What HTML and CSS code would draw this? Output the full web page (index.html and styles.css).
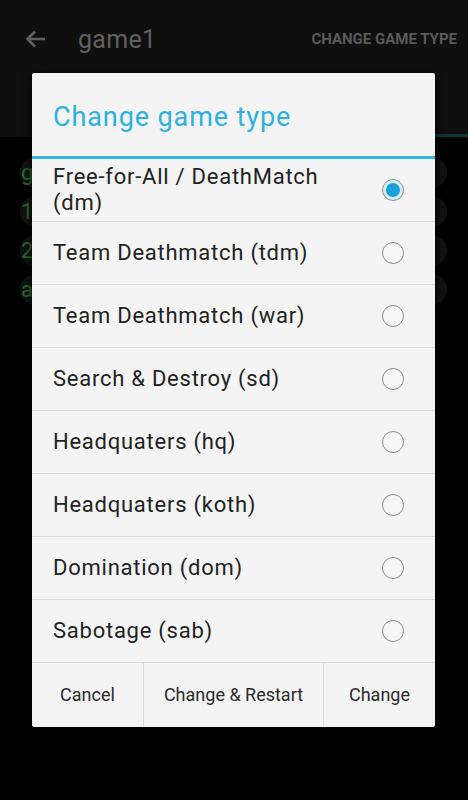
FILE: index.html
```html
<!DOCTYPE html>
<html>
<head>
<meta charset="utf-8">
<link rel="stylesheet" href="styles.css">
</head>
<body>
<div class="screen">
  <header class="appbar">
    <div class="appbar-row">
      <svg class="back" width="24" height="24" viewBox="0 0 24 24"><path d="M21 12H4M11 4.5L3.5 12 11 19.5" fill="none" stroke="#5f5f5f" stroke-width="2.6"/></svg>
      <span class="appbar-title">game1</span>
      <span class="appbar-action">CHANGE GAME TYPE</span>
    </div>
    <div class="tabline"><span class="tabline-ind"></span></div>
  </header>
  <main class="bglist">
    <div class="bgrow"><span class="bgtext">g</span></div>
    <div class="bgrow"><span class="bgtext">1</span></div>
    <div class="bgrow"><span class="bgtext">2</span></div>
    <div class="bgrow"><span class="bgtext">a</span></div>
  </main>

  <div class="dialog">
    <div class="dlg-title">Change game type</div>
    <div class="dlg-list">
      <div class="opt"><span class="opt-label">Free-for-All / DeathMatch (dm)</span><span class="radio checked"><span class="dot"></span></span></div>
      <div class="opt"><span class="opt-label">Team Deathmatch (tdm)</span><span class="radio"></span></div>
      <div class="opt"><span class="opt-label">Team Deathmatch (war)</span><span class="radio"></span></div>
      <div class="opt"><span class="opt-label">Search &amp; Destroy (sd)</span><span class="radio"></span></div>
      <div class="opt"><span class="opt-label">Headquaters (hq)</span><span class="radio"></span></div>
      <div class="opt"><span class="opt-label">Headquaters (koth)</span><span class="radio"></span></div>
      <div class="opt"><span class="opt-label">Domination (dom)</span><span class="radio"></span></div>
      <div class="opt"><span class="opt-label">Sabotage (sab)</span><span class="radio"></span></div>
    </div>
    <div class="dlg-buttons">
      <button class="btn">Cancel</button>
      <button class="btn">Change &amp; Restart</button>
      <button class="btn">Change</button>
    </div>
  </div>
</div>
</body>
</html>
```
FILE: styles.css
```css
html, body {
  margin: 0;
  padding: 0;
  background: #000;
}
body {
  font-family: Roboto, "Noto Sans", sans-serif;
  width: 468px;
  height: 800px;
  overflow: hidden;
}
.screen {
  position: relative;
  width: 468px;
  height: 800px;
  background: #000;
}
.appbar {
  background: #0f0f0f;
  height: 137px;
  display: flex;
  flex-direction: column;
}
.appbar-row {
  height: 78px;
  display: flex;
  align-items: center;
  padding: 0 11px 0 24px;
}
.back {
  flex: none;
}
.appbar-title {
  margin-left: 30px;
  font-size: 25px;
  letter-spacing: 0.3px;
  color: #606060;
  flex: 1;
}
.appbar-action {
  font-size: 15px;
  font-weight: bold;
  color: #5a5a5a;
}
.tabline {
  margin-top: auto;
  height: 3px;
  display: flex;
  justify-content: flex-end;
}
.tabline-ind {
  width: 234px;
  background: #0b3b37;
}
.bglist {
  padding: 20px 21px 0 20px;
  display: flex;
  flex-direction: column;
  gap: 8px;
}
.bgrow {
  height: 31px;
  border-radius: 16px;
  background: #121212;
  display: flex;
  align-items: center;
}
.bgtext {
  color: #2b6a2b;
  font-size: 22px;
  padding-left: 1px;
}
.dialog {
  position: absolute;
  left: 32px;
  top: 73px;
  width: 403px;
  background: #f4f4f4;
  border-radius: 2px;
  box-shadow: 0 2px 10px rgba(0,0,0,0.9);
  display: flex;
  flex-direction: column;
}
.dlg-title {
  height: 86px;
  box-sizing: border-box;
  border-bottom: 3px solid #33b5e5;
  color: #2cb1e3;
  font-size: 27px;
  letter-spacing: 0.9px;
  padding-left: 21px;
  display: flex;
  align-items: center;
  padding-top: 4px;
}
.dlg-list {
  display: flex;
  flex-direction: column;
}
.opt {
  height: 63px;
  box-sizing: border-box;
  border-bottom: 1px solid #dadada;
  display: flex;
  align-items: center;
  padding: 0 31px 0 21px;
}
.opt-label {
  flex: 1;
  font-size: 22px;
  letter-spacing: 0.75px;
  line-height: 26px;
  color: #222;
  max-width: 290px;
  margin-right: auto;
}
.radio {
  flex: none;
  width: 20px;
  height: 20px;
  border: 1.5px solid #8c8c8c;
  border-radius: 50%;
  display: flex;
  align-items: center;
  justify-content: center;
  background: #f6f6f6;
}
.radio.checked {
  background: #d3eef9;
  border-color: #909090;
}
.dot {
  width: 14px;
  height: 14px;
  border-radius: 50%;
  background: #1aa0d8;
}
.dlg-buttons {
  display: grid;
  grid-template-columns: 111px 180px 1fr;
  height: 64px;
}
.btn {
  font-family: Roboto, "Noto Sans", sans-serif;
  font-size: 18px;
  color: #2a2a2a;
  background: transparent;
  border: 0;
  border-left: 1px solid #dadada;
  padding: 0 0 2px 0;
  margin: 0;
}
.btn:first-child {
  border-left: 0;
}
```
